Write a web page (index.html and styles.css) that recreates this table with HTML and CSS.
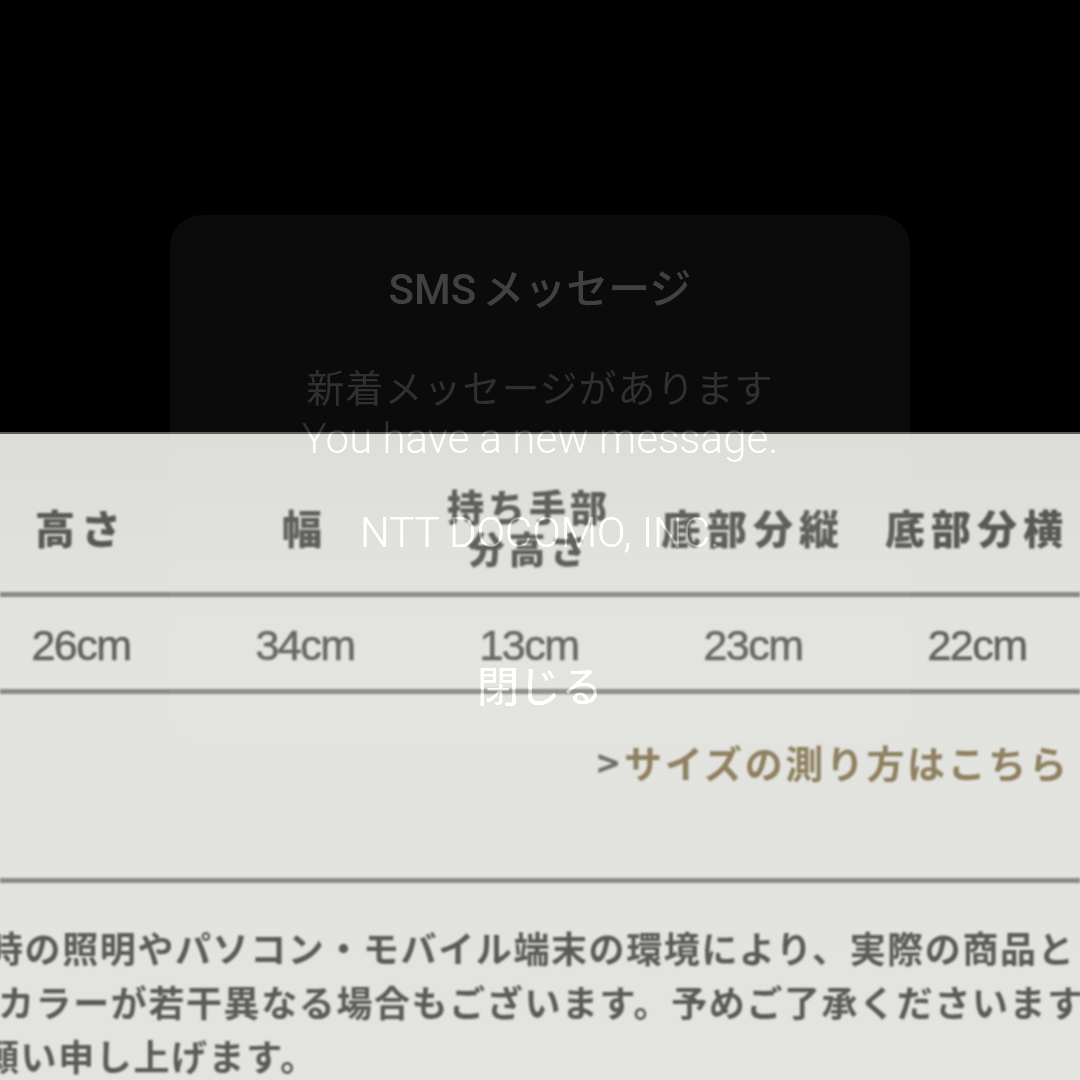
FILE: index.html
```html
<!DOCTYPE html>
<html lang="ja">
<head>
<meta charset="utf-8">
<title>SMS</title>
<link rel="stylesheet" href="styles.css">
</head>
<body>
<div class="screen">
  <div class="dark-top"></div>
  <div class="photo">
    <div class="photo-inner">
      <div class="size-table">
        <div class="row head">
          <div class="cell">高さ</div>
          <div class="cell">幅</div>
          <div class="cell two">持ち手部<br>分高さ</div>
          <div class="cell">底部分縦</div>
          <div class="cell">底部分横</div>
        </div>
        <div class="rule"></div>
        <div class="row vals">
          <div class="cell">26cm</div>
          <div class="cell">34cm</div>
          <div class="cell">13cm</div>
          <div class="cell">23cm</div>
          <div class="cell">22cm</div>
        </div>
        <div class="rule"></div>
      </div>
      <div class="link-row"><span class="chev">&gt;</span>サイズの測り方はこちら</div>
      <div class="rule wide"></div>
      <div class="note">
        <div class="ln l1">時の照明やパソコン・モバイル端末の環境により、実際の商品と</div>
        <div class="ln l2">カラーが若干異なる場合もございます。予めご了承くださいます</div>
        <div class="ln l3">願い申し上げます。</div>
      </div>
    </div>
  </div>

  <div class="dialog">
    <div class="d-title"><span class="latin">SMS</span>メッセージ</div>
    <div class="d-body">
      <div class="jp">新着メッセージがあります</div>
      <div class="en">You have a new message.</div>
    </div>
    <div class="d-sender">NTT DOCOMO, INC.</div>
    <div class="d-close">閉じる</div>
  </div>
</div>
</body>
</html>
```

FILE: styles.css
```css
* { box-sizing: border-box; }
html, body {
  margin: 0;
  padding: 0;
  background: #000;
}
.screen {
  position: relative;
  width: 1080px;
  height: 1080px;
  overflow: hidden;
  background: #000;
}
.dark-top {
  height: 432px;
  background: #000;
}
.photo {
  height: 648px;
  background: linear-gradient(180deg, #dcdcd8 0%, #e2e2de 30%, #e3e3df 100%);
  border-top: 2px solid #5a5a58;
  overflow: hidden;
}
.photo-inner {
  filter: blur(0.8px);
}
.size-table {
  margin-left: -31px;
  width: 1120px;
}
.row {
  display: grid;
  grid-template-columns: repeat(5, 224px);
}
.row.head {
  height: 158px;
  padding-top: 28px;
  align-items: center;
}
.row.head .cell {
  text-align: center;
  font-family: "Noto Sans CJK JP", sans-serif;
  font-weight: 900;
  font-size: 40px;
  letter-spacing: 6px;
  color: #585856;
  line-height: 48px;
}
.row.head .cell.two {
  font-size: 37px;
  line-height: 42px;
  letter-spacing: 4px;
}
.rule {
  height: 5px;
  background: #8a8986;
  margin-left: 31px;
  width: 1080px;
}
.rule.wide {
  margin-left: 0;
}
.row.vals {
  height: 92px;
  padding-top: 4px;
  align-items: center;
}
.row.vals .cell {
  text-align: center;
  font-family: "Liberation Sans", Arial, sans-serif;
  font-size: 43px;
  letter-spacing: -1.5px;
  color: #626260;
  line-height: 48px;
  -webkit-text-stroke: 0.6px #626260;
}
.link-row {
  height: 184px;
  padding-top: 45px;
  padding-left: 597px;
  white-space: nowrap;
  font-family: "Noto Sans CJK JP", sans-serif;
  font-weight: 700;
  font-size: 38px;
  line-height: 46px;
  letter-spacing: 2.6px;
  color: #8e8060;
}
.link-row .chev {
  color: #6e6e6c;
  margin-right: 2px;
}
.note {
  padding-top: 37px;
}
.ln {
  white-space: nowrap;
  font-family: "Noto Sans CJK JP", sans-serif;
  font-weight: 700;
  font-size: 36px;
  letter-spacing: 1.6px;
  line-height: 54px;
  color: #5a5a58;
}
.ln.l1 { margin-left: -13px; }
.ln.l2 { margin-left: -2px; }
.ln.l3 { margin-left: -17px; }

/* overlay dialog */
.dialog {
  position: absolute;
  left: 170px;
  top: 215px;
  width: 740px;
  height: 527px;
  border-radius: 32px;
  background: rgba(255, 255, 255, 0.045);
  display: flex;
  flex-direction: column;
  align-items: center;
  padding-top: 46px;
  text-align: center;
}
.dialog > div {
  mix-blend-mode: screen;
  mix-blend-mode: plus-lighter;
}
.d-title {
  font-family: "Noto Sans CJK JP", sans-serif;
  font-weight: 500;
  font-size: 42px;
  line-height: 50px;
  color: #363636;
}
.d-title .latin {
  font-family: Roboto, "Noto Sans CJK JP", sans-serif;
  font-weight: 500;
  margin-right: 6px;
}
.d-body {
  margin-top: 44px;
  line-height: 53px;
  color: #252525;
}
.d-body .jp {
  font-family: "Noto Sans CJK JP", sans-serif;
  font-weight: 400;
  font-size: 38px;
  letter-spacing: 1px;
}
.d-body .en {
  font-family: Roboto, "Noto Sans", sans-serif;
  font-weight: 300;
  font-size: 42px;
}
.d-sender {
  margin-top: 45px;
  font-family: Roboto, "Noto Sans", sans-serif;
  font-weight: 300;
  font-size: 42px;
  line-height: 46px;
  color: #3a3a3a;
}
.d-close {
  margin-top: 103px;
  font-family: "Noto Sans CJK JP", sans-serif;
  font-weight: 400;
  font-size: 42px;
  line-height: 50px;
  color: #3a3a3a;
}
```
